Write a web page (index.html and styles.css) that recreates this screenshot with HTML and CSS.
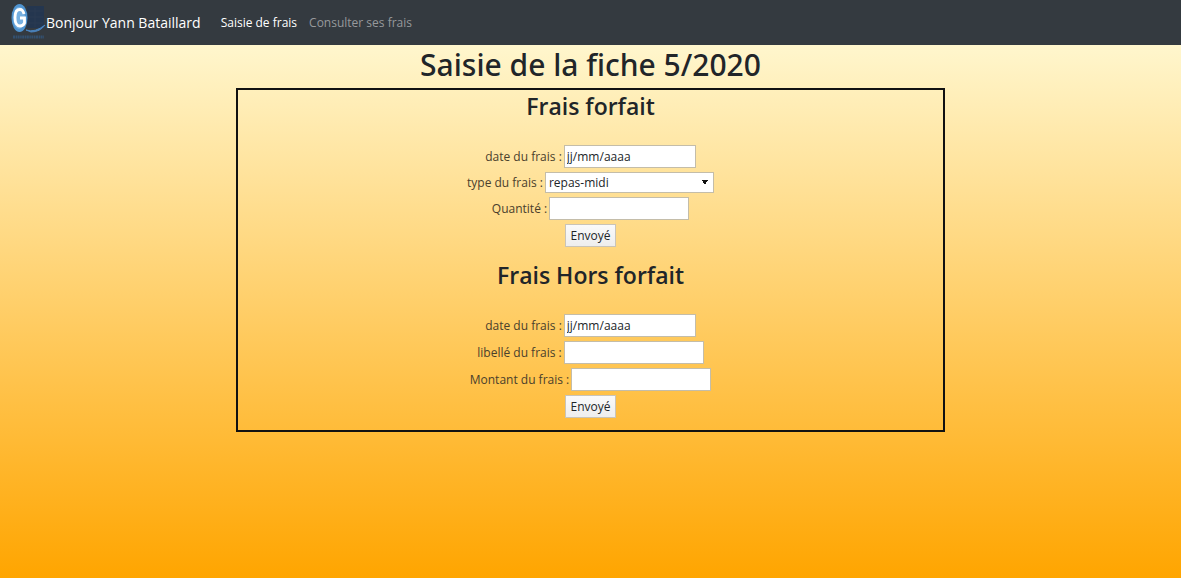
FILE: index.html
```html
<!DOCTYPE html>
<html lang="fr">
<head>
<meta charset="utf-8">
<title>Saisie de frais</title>
<link rel="stylesheet" href="styles.css">
</head>
<body>
<header class="navbar">
  <a class="brand" href="#">
    <svg class="logo" viewBox="0 0 35 38" aria-hidden="true">
      <rect x="16" y="2" width="17" height="22" fill="#24364f"/>
      <path d="M18 7H32M18 13H32M18 19H32M24 4V23" stroke="#2b3b52" stroke-width="1"/>
      <path d="M15 26Q24 29 34 21Q29 28 20 28Z" fill="#4a83bd" stroke="#4a83bd"/>
      <ellipse cx="8.500" cy="14" rx="8" ry="14" fill="#5094d0"/>
      <ellipse cx="8" cy="14" rx="6" ry="11" fill="#76afe0"/>
      <path d="M13 10Q12 5.500 9 5.500Q4 5.500 4 13.500Q4 22 9 22Q12 22 13.500 19V14H9" fill="none" stroke="#fff" stroke-width="2.800"/>
      <path d="M2 33H33" stroke="#33506f" stroke-width="3" stroke-dasharray="2 .6 1.500 .5"/>
    </svg>
    <span>Bonjour Yann Bataillard</span>
  </a>
  <nav class="nav">
    <a class="nav-link active" href="#">Saisie de frais</a>
    <a class="nav-link" href="#">Consulter ses frais</a>
  </nav>
</header>
<main>
  <h1>Saisie de la fiche 5/2020</h1>
  <div class="panel">
    <form>
      <h2>Frais forfait</h2>
      <div class="row"><label for="date1">date du frais :</label><input class="date" id="date1" type="text" placeholder="jj/mm/aaaa"></div>
      <div class="row"><label for="type">type du frais :</label><select id="type"><option>repas-midi</option></select></div>
      <div class="row"><label for="qte">Quantité :</label><input id="qte" type="text"></div>
      <div class="row"><button type="submit">Envoyé</button></div>
    </form>
    <form>
      <h2>Frais Hors forfait</h2>
      <div class="row"><label for="date2">date du frais :</label><input class="date" id="date2" type="text" placeholder="jj/mm/aaaa"></div>
      <div class="row"><label for="libelle">libellé du frais :</label><input id="libelle" type="text"></div>
      <div class="row"><label for="montant">Montant du frais :</label><input id="montant" type="text"></div>
      <div class="row"><button type="submit">Envoyé</button></div>
    </form>
  </div>
</main>
</body>
</html>
```
FILE: styles.css
```css
* { box-sizing: border-box; }
html { min-height: 100%; background: linear-gradient(#fff7cf 40px, #ffa500); }
body { margin: 0; color: #212529; font: 12px/18px "Open Sans", "Noto Sans", sans-serif; }
.navbar { display: flex; align-items: center; gap: 14px; height: 45px; padding: 0 11px; background: #343a40; }
.brand { display: flex; align-items: center; color: #fff; font-size: 14px; text-decoration: none; }
.logo { width: 35px; height: 38px; }
.nav { display: flex; }
.nav-link { padding: 6px; color: #97999c; text-decoration: none; }
.nav-link.active { color: #fff; }
h1, h2 { margin: 0; text-align: center; }
h1 { font-family: "Noto Sans", sans-serif; font-weight: 500; font-size: 30px; line-height: 36px; padding: 2px 0 5px; }
h2 { font-weight: 600; font-size: 23px; line-height: 30px; padding-bottom: 20px; }
.panel { width: 60%; margin: 0 auto; padding: 1px 0 12px; border: 2px solid #111; }
form + form { margin-top: 13px; }
form { display: grid; gap: 4px; }
.row { display: flex; justify-content: center; align-items: center; gap: 2px; }
label { color: #4a402c; }
input, select, button { font: inherit; color: #212529; border-radius: 0; margin: 0; }
input { width: 140px; height: 23px; padding: 0 2px; background: #fff; border: 1px solid #c4bda9; }
input.date { width: 132px; }
input::placeholder { color: #212529; opacity: 1; }
select { width: 169px; height: 21px; padding: 0 3px; appearance: none; border: 1px solid #c4bda9; background: conic-gradient(from -30deg at 50% 100%, #111 60deg, transparent 0) right 5px center / 5px 5px no-repeat #fff; background: linear-gradient(to bottom right, #111 50%, transparent 50%) right 5px center / 3px 5px no-repeat, linear-gradient(to bottom left, #111 50%, transparent 50%) right 8px center / 3px 5px no-repeat, #fff; }
button { width: 51px; height: 23px; padding: 0; background: linear-gradient(#fafafa, #eee); border: 1px solid #c9c4b8; }
```
